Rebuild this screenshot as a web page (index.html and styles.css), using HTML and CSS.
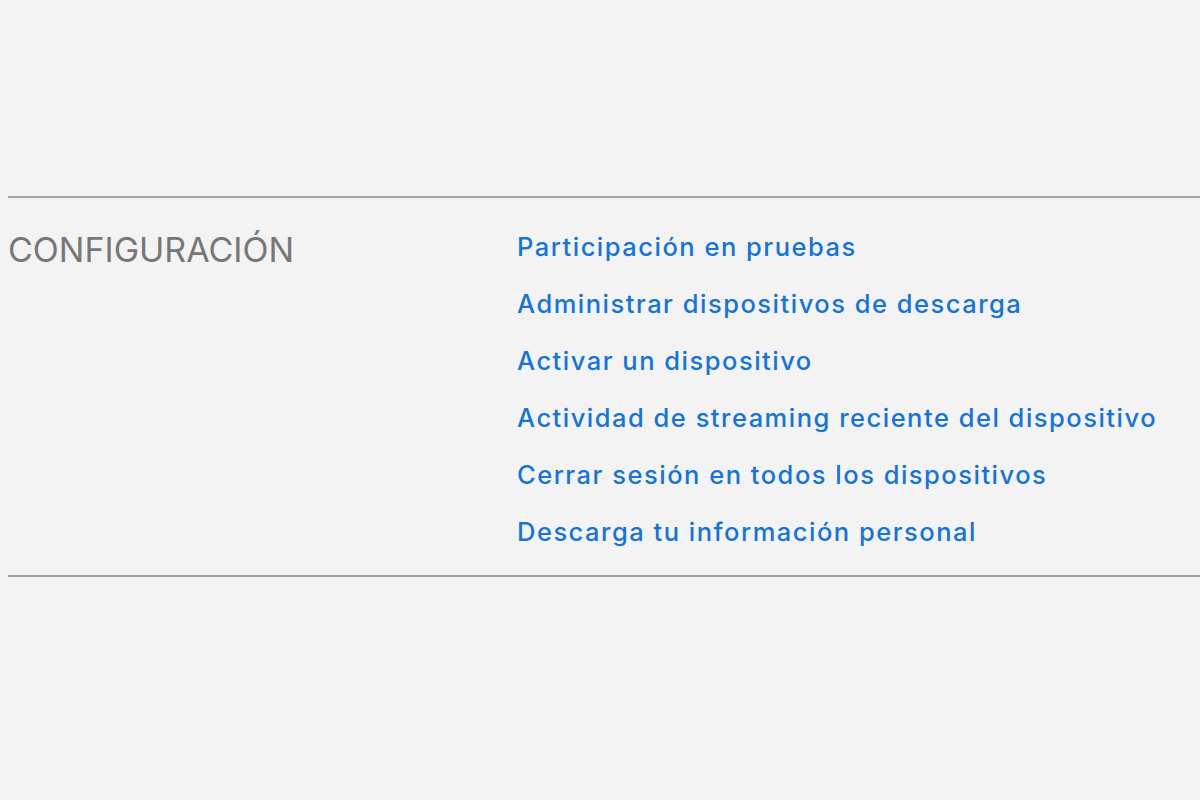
FILE: index.html
```html
<!DOCTYPE html>
<html lang="es">
<head>
<meta charset="utf-8">
<title>Configuración</title>
<link rel="stylesheet" href="styles.css">
</head>
<body>
<main class="page">
  <section class="settings">
    <h2 class="settings-title">CONFIGURACIÓN</h2>
    <ul class="settings-links">
      <li><a href="#">Participación en pruebas</a></li>
      <li><a href="#">Administrar dispositivos de descarga</a></li>
      <li><a href="#">Activar un dispositivo</a></li>
      <li><a href="#">Actividad de streaming reciente del dispositivo</a></li>
      <li><a href="#">Cerrar sesión en todos los dispositivos</a></li>
      <li><a href="#">Descarga tu información personal</a></li>
    </ul>
  </section>
</main>
</body>
</html>
```
FILE: styles.css
```css
html, body {
  margin: 0;
  padding: 0;
  background: #f3f3f3;
  height: 100%;
}
body {
  font-family: Inter, Roboto, "Liberation Sans", sans-serif;
}
.page {
  padding: 196px 0 0 8px;
}
.settings {
  display: grid;
  grid-template-columns: 509px 1fr;
  border-top: 2px solid #a3a3a3;
  border-bottom: 2px solid #a3a3a3;
  padding: 20px 0 15px;
}
.settings-title {
  margin: 0;
  padding-top: 3px;
  font-size: 34px;
  line-height: 57px;
  font-weight: 400;
  color: #777777;
}
.settings-links {
  list-style: none;
  margin: 0;
  padding: 0;
}
.settings-links li {
  font-size: 25.5px;
  line-height: 57px;
  letter-spacing: 1.5px;
}
.settings-links a {
  color: #1774d4;
  font-weight: 500;
  text-decoration: none;
}
```
